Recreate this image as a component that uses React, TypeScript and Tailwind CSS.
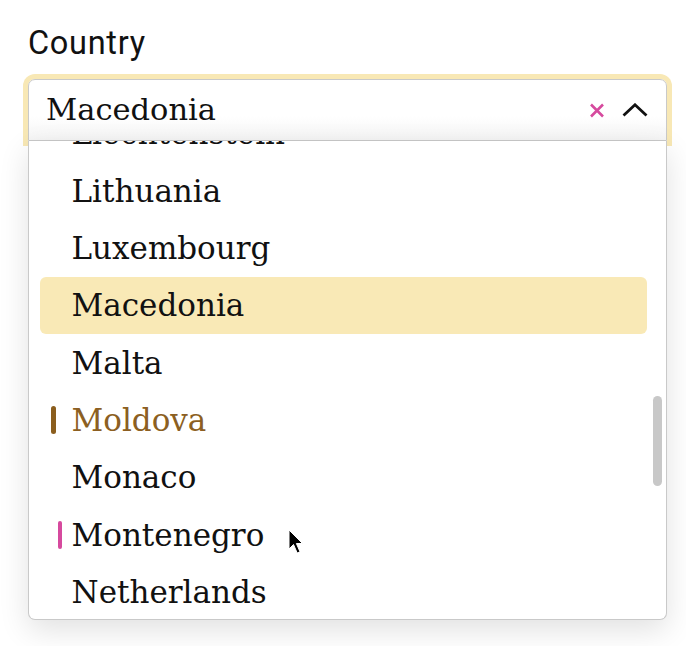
import { useState } from "react";

const countries = [
  "Liechtenstein",
  "Lithuania",
  "Luxembourg",
  "Macedonia",
  "Malta",
  "Moldova",
  "Monaco",
  "Montenegro",
  "Netherlands",
];

const serif = { fontFamily: '"DejaVu Serif", "Liberation Serif", serif' };

export default function App() {
  const [selected] = useState("Macedonia");

  return (
    <div className="relative min-h-[646px] bg-white">
      <div className="ml-[28px] w-[639px] pt-[23px]">
        <label
          className="block h-[40px] text-[32.5px] leading-[40px] tracking-[0.7px] text-[#111]"
          style={{ fontFamily: 'Roboto, "Liberation Sans", sans-serif' }}
        >
          Country
        </label>

        <div className="relative mt-[16px]">
          <div className="flex h-[62px] items-center rounded-t-[7px] border-[1.5px] border-[#c9c9c9] bg-gradient-to-b from-white from-60% to-[#f5f5f5] pl-[17px] pr-[18px] shadow-[0_0_0_5px_#f8e8b5]">
            <span className="flex-1 text-[30.5px] text-[#111]" style={serif}>
              {selected}
            </span>
            <svg width="16" height="15" viewBox="0 0 16 15" className="mr-[17px]">
              <path d="M2 1.5 L14 13.5 M14 1.5 L2 13.5" stroke="#d64a9e" strokeWidth="2.6" />
            </svg>
            <svg width="26" height="14" viewBox="0 0 26 14">
              <path d="M1.5 12.5 L13 1.8 L24.5 12.5" stroke="#111" strokeWidth="2.8" fill="none" />
            </svg>
          </div>

          <div className="relative z-10 h-[479px] overflow-hidden rounded-b-[7px] border-[1.5px] border-t-0 border-[#c9c9c9] bg-white shadow-[0_10px_30px_rgba(0,0,0,0.12)]">
            <ul className="-mt-[36px] pl-[10.5px] pr-[19.5px]">
              {countries.map((name) => (
                <li
                  key={name}
                  className={
                    "relative flex h-[57.33px] items-center rounded-[6px] pl-[32px] text-[31px] " +
                    (name === selected
                      ? "bg-[#f9e9b6] text-[#111]"
                      : name === "Moldova"
                        ? "text-[#8c5f22]"
                        : "text-[#111]")
                  }
                  style={serif}
                >
                  {name === "Moldova" ? (
                    <span className="absolute left-[11px] top-1/2 h-[28px] w-[5px] -translate-y-1/2 rounded-full bg-[#8b5e1e]" />
                  ) : null}
                  {name === "Montenegro" ? (
                    <span className="absolute left-[18px] top-1/2 h-[28px] w-[4.5px] -translate-y-1/2 rounded-full bg-[#d64a9e]" />
                  ) : null}
                  {name}
                </li>
              ))}
            </ul>
            <div className="absolute right-[4.5px] top-[255px] h-[90px] w-[9px] rounded-full bg-[#c8c8c8]" />
          </div>
        </div>
      </div>

      <svg
        width="16"
        height="26"
        viewBox="0 0 16 26"
        className="absolute left-[288px] top-[529px] z-20"
      >
        <path
          d="M1 1 L1 20 L5.5 15.5 L9.2 24 L12 22.8 L8.4 14.5 L14.5 14.5 Z"
          fill="#000"
          stroke="#fff"
          strokeWidth="1"
        />
      </svg>
    </div>
  );
}
